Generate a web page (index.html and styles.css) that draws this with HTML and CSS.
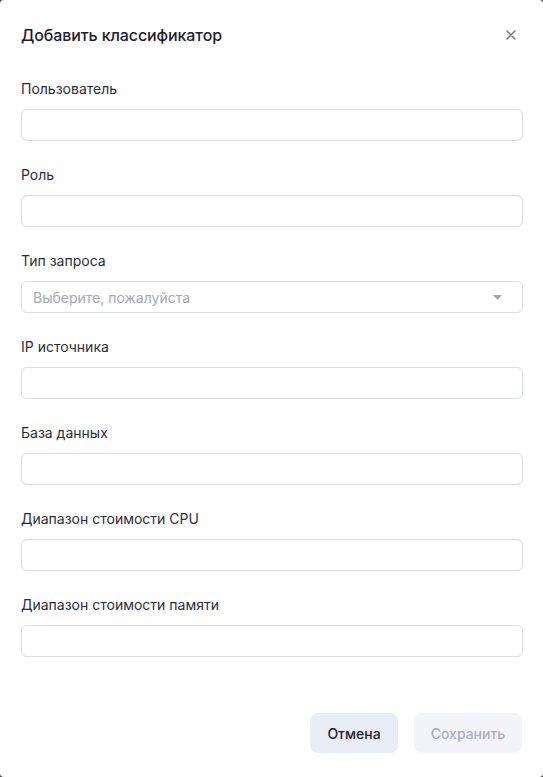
FILE: index.html
```html
<!DOCTYPE html>
<html lang="ru">
<head>
    <meta charset="UTF-8">
    <meta name="viewport" content="width=device-width, initial-scale=1.0">
    <title>Добавить классификатор</title>
    <link rel="stylesheet" href="styles.css">
</head>
<body>
    <div class="modal">
        <div class="modal-header">
            <h2>Добавить классификатор</h2>
            <button class="close" aria-label="Закрыть">
                <svg width="10" height="10" viewBox="0 0 10 10"><path d="M1 1L9 9M9 1L1 9" stroke="#6b7183" stroke-width="1.4" stroke-linecap="round"/></svg>
            </button>
        </div>

        <form class="form">
            <div class="field">
                <label>Пользователь</label>
                <input type="text">
            </div>
            <div class="field">
                <label>Роль</label>
                <input type="text">
            </div>
            <div class="field">
                <label>Тип запроса</label>
                <div class="select">
                    <span>Выберите, пожалуйста</span>
                    <svg width="9" height="5" viewBox="0 0 9 5"><path d="M0 0H9L4.5 5Z" fill="#a3a7b2"/></svg>
                </div>
            </div>
            <div class="field">
                <label>IP источника</label>
                <input type="text">
            </div>
            <div class="field">
                <label>База данных</label>
                <input type="text">
            </div>
            <div class="field">
                <label>Диапазон стоимости CPU</label>
                <input type="text">
            </div>
            <div class="field">
                <label>Диапазон стоимости памяти</label>
                <input type="text">
            </div>
        </form>

        <div class="modal-footer">
            <button class="btn btn-cancel">Отмена</button>
            <button class="btn btn-save" disabled>Сохранить</button>
        </div>
    </div>
</body>
</html>
```

FILE: styles.css
```css
* {
    box-sizing: border-box;
}

body {
    margin: 0;
    padding: 0;
    background-color: #4a4d55;
    font-family: Inter, "Noto Sans", Arial, sans-serif;
    color: #1d2030;
}

.modal {
    width: 543px;
    height: 777px;
    background-color: #fff;
    border-radius: 4px;
    padding: 0 20px 0 21px;
    display: flex;
    flex-direction: column;
}

.modal-header {
    display: flex;
    align-items: center;
    justify-content: space-between;
    height: 70px;
}

.modal-header h2 {
    margin: 0;
    font-size: 16px;
    font-weight: 500;
    letter-spacing: -0.1px;
}

.close {
    border: none;
    background: none;
    padding: 0;
    width: 10px;
    height: 10px;
    margin-right: 7px;
    cursor: pointer;
    display: flex;
}

.form {
    display: flex;
    flex-direction: column;
    gap: 24px;
    padding-top: 9px;
}

.field label {
    display: block;
    font-size: 14px;
    line-height: 20px;
    margin-bottom: 10px;
    color: #2a2d3a;
}

.field input,
.select {
    display: flex;
    align-items: center;
    width: 100%;
    height: 32px;
    border: 1px solid #d9dbe5;
    border-radius: 6px;
    background: #fff;
    padding: 0 11px;
    font-size: 14px;
    font-family: inherit;
    outline: none;
}

.select {
    justify-content: space-between;
    color: #a4a8b6;
    padding-right: 20px;
}

.modal-footer {
    margin-top: auto;
    display: flex;
    justify-content: flex-end;
    gap: 16px;
    padding-bottom: 24px;
    margin-right: 1px;
}

.btn {
    height: 40px;
    border: none;
    border-radius: 8px;
    font-family: inherit;
    font-size: 14px;
    font-weight: 500;
    cursor: pointer;
}

.btn-cancel {
    width: 88px;
    background-color: #e9edf5;
    color: #1d2030;
}

.btn-save {
    width: 108px;
    background-color: #f3f4f7;
    color: #a9aeb9;
    cursor: default;
}
```
